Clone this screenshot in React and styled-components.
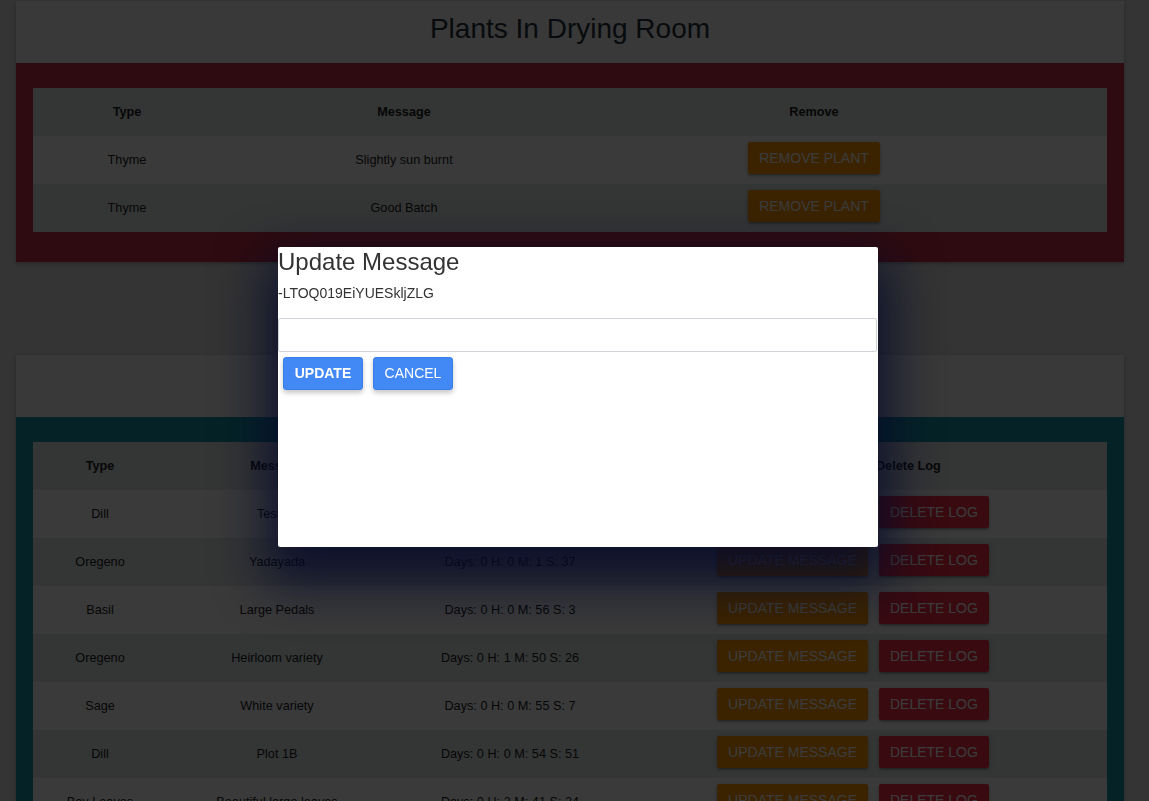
import React from "react";
import styled, { createGlobalStyle } from "styled-components";

const GlobalStyle = createGlobalStyle`
  html, body {
    margin: 0;
    padding: 0;
    background: #dedede;
    font-family: "Liberation Sans", Arial, sans-serif;
    overflow: hidden;
  }
`;

const Page = styled.div`
  display: flex;
  flex-direction: column;
  gap: 93px;
  padding: 1px 25px 0 16px;
`;

const Card = styled.section`
  background: #ffffff;
  box-shadow: 0 2px 2px 0 rgba(0, 0, 0, 0.14), 0 1px 5px 0 rgba(0, 0, 0, 0.12);
`;

const CardHeader = styled.h2`
  margin: 0;
  height: 62px;
  padding-top: 12px;
  box-sizing: border-box;
  text-align: center;
  background: #f5f5f5;
  color: #263238;
  font-size: 28px;
  line-height: 32px;
  font-weight: 400;
`;

const Band = styled.div`
  background: ${(p) => p.$color};
  padding: 25px 17px 30px;
`;

const Table = styled.table`
  width: 100%;
  border-collapse: collapse;
  table-layout: fixed;
  background: #dee6e6;
  color: #222;
  font-size: 12.7px;
`;

const Th = styled.th`
  height: 48px;
  padding: 0;
  font-weight: 700;
  text-align: center;
  vertical-align: middle;
`;

const Tr = styled.tr`
  &:nth-child(odd) {
    background: #fbfbfb;
  }
`;

const Td = styled.td`
  height: 48px;
  padding: 0;
  text-align: center;
  vertical-align: middle;
`;

const ActionButton = styled.button`
  display: inline-block;
  height: 32px;
  margin: 0 0 4px;
  padding: 0 11px;
  border: none;
  border-radius: 2px;
  background: ${(p) => p.$bg};
  color: #ffffff;
  font-family: "Liberation Sans", Arial, sans-serif;
  font-size: 14px;
  text-transform: uppercase;
  vertical-align: middle;
  box-shadow: 0 2px 2px 0 rgba(0, 0, 0, 0.14), 0 3px 1px -2px rgba(0, 0, 0, 0.12),
    0 1px 5px 0 rgba(0, 0, 0, 0.2);
  & + & {
    margin-left: 11px;
  }
`;

const Overlay = styled.div`
  position: fixed;
  inset: 0;
  background: rgba(0, 0, 0, 0.77);
  z-index: 10;
`;

const Modal = styled.div`
  position: fixed;
  left: 278px;
  top: 247px;
  width: 600px;
  height: 300px;
  background: #ffffff;
  border-radius: 2px;
  z-index: 11;
  box-shadow: 0 24px 50px 12px rgba(6, 10, 42, 0.85);
  display: flex;
  flex-direction: column;
  color: #333;
`;

const ModalTitle = styled.h3`
  margin: 0;
  padding-top: 1px;
  font-size: 24px;
  font-weight: 400;
  line-height: 28px;
`;

const ModalId = styled.div`
  margin-top: 9px;
  font-size: 14px;
  line-height: 16px;
`;

const MessageInput = styled.input`
  box-sizing: border-box;
  margin-top: 17px;
  width: 599px;
  height: 34px;
  border: 1px solid #cfd3d7;
  border-radius: 2px;
  padding: 0 8px;
  font-family: "Liberation Sans", Arial, sans-serif;
  font-size: 14px;
  outline: none;
`;

const ModalActions = styled.div`
  display: flex;
  gap: 10px;
  padding: 5px 5px 0;
`;

const ModalButton = styled.button`
  width: 80px;
  height: 33px;
  padding: 0 0 2px;
  border: 1px solid #3a7fe8;
  border-radius: 3px;
  background: #4289f5;
  color: #ffffff;
  font-family: "Liberation Sans", Arial, sans-serif;
  font-size: 14px;
  font-weight: ${(p) => (p.$strong ? 700 : 400)};
  box-shadow: 0 3px 5px rgba(0, 0, 0, 0.22);
`;

const dryingRoom = [
  { type: "Thyme", message: "Slightly sun burnt" },
  { type: "Thyme", message: "Good Batch" },
];

const logs = [
  { type: "Dill", message: "Testing", time: "Days: 0 H: 0 M: 58 S: 12" },
  { type: "Oregeno", message: "Yadayada", time: "Days: 0 H: 0 M: 1 S: 37" },
  { type: "Basil", message: "Large Pedals", time: "Days: 0 H: 0 M: 56 S: 3" },
  { type: "Oregeno", message: "Heirloom variety", time: "Days: 0 H: 1 M: 50 S: 26" },
  { type: "Sage", message: "White variety", time: "Days: 0 H: 0 M: 55 S: 7" },
  { type: "Dill", message: "Plot 1B", time: "Days: 0 H: 0 M: 54 S: 51" },
  { type: "Bay Leaves", message: "Beautiful large leaves", time: "Days: 0 H: 2 M: 41 S: 24" },
];

export default function App() {
  return (
    <>
      <GlobalStyle />
      <Page>
        <Card>
          <CardHeader>Plants In Drying Room</CardHeader>
          <Band $color="#c83046">
            <Table>
              <colgroup>
                <col style={{ width: 188 }} />
                <col style={{ width: 366 }} />
                <col style={{ width: 454 }} />
                <col />
              </colgroup>
              <thead>
                <tr>
                  <Th>Type</Th>
                  <Th>Message</Th>
                  <Th>Remove</Th>
                  <Th />
                </tr>
              </thead>
              <tbody>
                {dryingRoom.map((p, i) => (
                  <Tr key={i}>
                    <Td>{p.type}</Td>
                    <Td>{p.message}</Td>
                    <Td>
                      <ActionButton $bg="#ff9800">Remove Plant</ActionButton>
                    </Td>
                    <Td />
                  </Tr>
                ))}
              </tbody>
            </Table>
          </Band>
        </Card>

        <Card>
          <CardHeader>Drying Log</CardHeader>
          <Band $color="#1698aa">
            <Table>
              <colgroup>
                <col style={{ width: 134 }} />
                <col style={{ width: 220 }} />
                <col style={{ width: 246 }} />
                <col style={{ width: 440 }} />
                <col />
              </colgroup>
              <thead>
                <tr>
                  <Th>Type</Th>
                  <Th>Message</Th>
                  <Th>Time Drying</Th>
                  <Th>Update Message / Delete Log</Th>
                  <Th />
                </tr>
              </thead>
              <tbody>
                {logs.map((l, i) => (
                  <Tr key={i}>
                    <Td>{l.type}</Td>
                    <Td>{l.message}</Td>
                    <Td>{l.time}</Td>
                    <Td>
                      <ActionButton $bg="#ff9800">Update Message</ActionButton>
                      <ActionButton $bg="#f52b48">Delete Log</ActionButton>
                    </Td>
                    <Td />
                  </Tr>
                ))}
              </tbody>
            </Table>
          </Band>
        </Card>
      </Page>

      <Overlay />
      <Modal>
        <ModalTitle>Update Message</ModalTitle>
        <ModalId>-LTOQ019EiYUESkljZLG</ModalId>
        <MessageInput type="text" />
        <ModalActions>
          <ModalButton $strong>UPDATE</ModalButton>
          <ModalButton>CANCEL</ModalButton>
        </ModalActions>
      </Modal>
    </>
  );
}
